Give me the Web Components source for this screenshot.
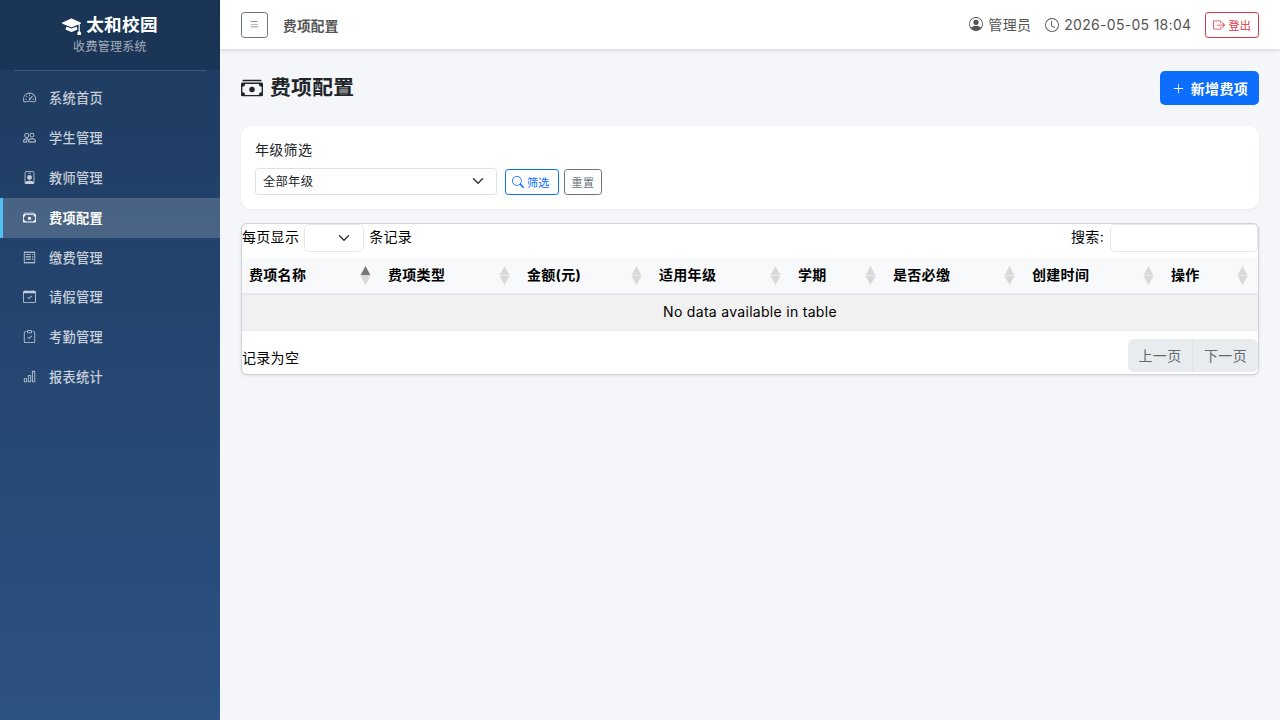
<!DOCTYPE html>
<html lang="zh"><head><meta charset="utf-8"><title>费项配置</title>
<style>
html,body{margin:0;height:100%}
body{font-family:Inter,"Noto Sans CJK SC",sans-serif;background:#f4f6fa;color:#212529;font-size:14px;letter-spacing:.3px}
</style></head><body>
<app-shell>
  <app-sidebar slot="side">
    <nav-item icon="speedometer2">系统首页</nav-item>
    <nav-item icon="people">学生管理</nav-item>
    <nav-item icon="person-badge">教师管理</nav-item>
    <nav-item icon="cash-stack" active>费项配置</nav-item>
    <nav-item icon="receipt">缴费管理</nav-item>
    <nav-item icon="calendar-check">请假管理</nav-item>
    <nav-item icon="clipboard-check">考勤管理</nav-item>
    <nav-item icon="bar-chart">报表统计</nav-item>
  </app-sidebar>
  <top-bar slot="top"></top-bar>
  <page-head></page-head>
  <filter-card></filter-card>
  <fee-table></fee-table>
</app-shell>
<script>
const P={
speedometer2:'<path d="M8 4a.5.5 0 0 1 .5.5V6a.5.5 0 0 1-1 0V4.5A.5.5 0 0 1 8 4M3.732 5.732a.5.5 0 0 1 .707 0l.915.914a.5.5 0 1 1-.708.708l-.914-.915a.5.5 0 0 1 0-.707M2 10a.5.5 0 0 1 .5-.5h1.586a.5.5 0 0 1 0 1H2.5A.5.5 0 0 1 2 10m9.5 0a.5.5 0 0 1 .5-.5h1.5a.5.5 0 0 1 0 1H12a.5.5 0 0 1-.5-.5m.754-4.246a.39.39 0 0 0-.527-.02L7.547 9.31a.91.91 0 1 0 1.302 1.258l3.434-4.297a.39.39 0 0 0-.029-.518z"/><path fill-rule="evenodd" d="M0 10a8 8 0 1 1 15.547 2.661c-.442 1.253-1.845 1.602-2.932 1.25C11.309 13.488 9.475 13 8 13c-1.474 0-3.31.488-4.615.911-1.087.352-2.49.003-2.932-1.25A8 8 0 0 1 0 10m8-7a7 7 0 0 0-6.603 9.329c.203.575.923.876 1.68.63C4.397 12.533 6.358 12 8 12s3.604.532 4.923.96c.757.245 1.477-.056 1.68-.631A7 7 0 0 0 8 3"/>',
people:'<path d="M15 14s1 0 1-1-1-4-5-4-5 3-5 4 1 1 1 1zm-7.978-1L7 12.996c.001-.264.167-1.03.76-1.72C8.312 10.629 9.282 10 11 10c1.717 0 2.687.63 3.24 1.276.593.69.758 1.457.76 1.72l-.008.002-.014.002zM11 7a2 2 0 1 0 0-4 2 2 0 0 0 0 4m3-2a3 3 0 1 1-6 0 3 3 0 0 1 6 0M6.936 9.28a6 6 0 0 0-1.23-.247A7 7 0 0 0 5 9c-4 0-5 3-5 4q0 1 1 1h4.216A2.24 2.24 0 0 1 5 13c0-1.01.377-2.042 1.09-2.904.243-.294.526-.569.846-.816M4.92 10A5.5 5.5 0 0 0 4 13H1c0-.26.164-1.03.76-1.724.545-.636 1.492-1.256 3.16-1.275ZM1.5 5.5a3 3 0 1 1 6 0 3 3 0 0 1-6 0m3-2a2 2 0 1 0 0 4 2 2 0 0 0 0-4"/>',
'person-badge':'<path d="M6.5 2a.5.5 0 0 0 0 1h3a.5.5 0 0 0 0-1zM11 8a3 3 0 1 1-6 0 3 3 0 0 1 6 0"/><path d="M4.5 0A2.5 2.5 0 0 0 2 2.5V14a2 2 0 0 0 2 2h8a2 2 0 0 0 2-2V2.5A2.5 2.5 0 0 0 11.5 0zM3 2.5A1.5 1.5 0 0 1 4.5 1h7A1.5 1.5 0 0 1 13 2.5v10.795a4.2 4.2 0 0 0-.776-.492C11.392 12.387 10.063 12 8 12s-3.392.387-4.224.803a4.2 4.2 0 0 0-.776.492z"/>',
'cash-stack':'<path d="M1 3a1 1 0 0 1 1-1h12a1 1 0 0 1 1 1zm7 8a2 2 0 1 0 0-4 2 2 0 0 0 0 4"/><path d="M0 5a1 1 0 0 1 1-1h14a1 1 0 0 1 1 1v8a1 1 0 0 1-1 1H1a1 1 0 0 1-1-1zm3 0a2 2 0 0 1-2 2v4a2 2 0 0 1 2 2h10a2 2 0 0 1 2-2V7a2 2 0 0 1-2-2z"/>',
receipt:'<path d="M1.92.506a.5.5 0 0 1 .434.14L3 1.293l.646-.647a.5.5 0 0 1 .708 0L5 1.293l.646-.647a.5.5 0 0 1 .708 0L7 1.293l.646-.647a.5.5 0 0 1 .708 0L9 1.293l.646-.647a.5.5 0 0 1 .708 0l.646.647.646-.647a.5.5 0 0 1 .708 0l.646.647.646-.647a.5.5 0 0 1 .801.13l.5 1A.5.5 0 0 1 15 2v12a.5.5 0 0 1-.053.224l-.5 1a.5.5 0 0 1-.8.13L13 14.707l-.646.647a.5.5 0 0 1-.708 0L11 14.707l-.646.647a.5.5 0 0 1-.708 0L9 14.707l-.646.647a.5.5 0 0 1-.708 0L7 14.707l-.646.647a.5.5 0 0 1-.708 0L5 14.707l-.646.647a.5.5 0 0 1-.708 0L3 14.707l-.646.647a.5.5 0 0 1-.801-.13l-.5-1A.5.5 0 0 1 1 14V2a.5.5 0 0 1 .053-.224l.5-1a.5.5 0 0 1 .367-.27m.217 1.338L2 2.118v11.764l.137.274.51-.51a.5.5 0 0 1 .707 0l.646.647.646-.646a.5.5 0 0 1 .708 0l.646.646.646-.646a.5.5 0 0 1 .708 0l.646.646.646-.646a.5.5 0 0 1 .708 0l.646.646.646-.646a.5.5 0 0 1 .708 0l.646.646.646-.646a.5.5 0 0 1 .708 0l.509.509.137-.274V2.118l-.137-.274-.51.51a.5.5 0 0 1-.707 0L12 1.707l-.646.647a.5.5 0 0 1-.708 0L10 1.707l-.646.647a.5.5 0 0 1-.708 0L8 1.707l-.646.647a.5.5 0 0 1-.708 0L6 1.707l-.646.647a.5.5 0 0 1-.708 0L4 1.707l-.646.647a.5.5 0 0 1-.708 0z"/><path d="M3 4.5a.5.5 0 0 1 .5-.5h6a.5.5 0 1 1 0 1h-6a.5.5 0 0 1-.5-.5m0 2a.5.5 0 0 1 .5-.5h6a.5.5 0 1 1 0 1h-6a.5.5 0 0 1-.5-.5m0 2a.5.5 0 0 1 .5-.5h6a.5.5 0 1 1 0 1h-6a.5.5 0 0 1-.5-.5m0 2a.5.5 0 0 1 .5-.5h6a.5.5 0 0 1 0 1h-6a.5.5 0 0 1-.5-.5m8-6a.5.5 0 0 1 .5-.5h1a.5.5 0 0 1 0 1h-1a.5.5 0 0 1-.5-.5m0 2a.5.5 0 0 1 .5-.5h1a.5.5 0 0 1 0 1h-1a.5.5 0 0 1-.5-.5m0 2a.5.5 0 0 1 .5-.5h1a.5.5 0 0 1 0 1h-1a.5.5 0 0 1-.5-.5m0 2a.5.5 0 0 1 .5-.5h1a.5.5 0 0 1 0 1h-1a.5.5 0 0 1-.5-.5"/>',
'calendar-check':'<path d="M10.854 7.146a.5.5 0 0 1 0 .708l-3 3a.5.5 0 0 1-.708 0l-1.5-1.5a.5.5 0 1 1 .708-.708L7.5 9.793l2.646-2.647a.5.5 0 0 1 .708 0"/><path d="M3.5 0a.5.5 0 0 1 .5.5V1h8V.5a.5.5 0 0 1 1 0V1h1a2 2 0 0 1 2 2v11a2 2 0 0 1-2 2H2a2 2 0 0 1-2-2V3a2 2 0 0 1 2-2h1V.5a.5.5 0 0 1 .5-.5M1 4v10a1 1 0 0 0 1 1h12a1 1 0 0 0 1-1V4z"/>',
'clipboard-check':'<path fill-rule="evenodd" d="M10.854 7.146a.5.5 0 0 1 0 .708l-3 3a.5.5 0 0 1-.708 0l-1.5-1.5a.5.5 0 1 1 .708-.708L7.5 9.793l2.646-2.647a.5.5 0 0 1 .708 0"/><path d="M4 1.5H3a2 2 0 0 0-2 2V14a2 2 0 0 0 2 2h10a2 2 0 0 0 2-2V3.5a2 2 0 0 0-2-2h-1v1h1a1 1 0 0 1 1 1V14a1 1 0 0 1-1 1H3a1 1 0 0 1-1-1V3.5a1 1 0 0 1 1-1h1z"/><path d="M9.5 1a.5.5 0 0 1 .5.5v1a.5.5 0 0 1-.5.5h-3a.5.5 0 0 1-.5-.5v-1a.5.5 0 0 1 .5-.5zm-3-1A1.5 1.5 0 0 0 5 1.5v1A1.5 1.5 0 0 0 6.5 4h3A1.5 1.5 0 0 0 11 2.5v-1A1.5 1.5 0 0 0 9.5 0z"/>',
'bar-chart':'<path d="M4 11H2v3h2zm5-4H7v7h2zm5-5v12h-2V2zm-2-1a1 1 0 0 0-1 1v12a1 1 0 0 0 1 1h2a1 1 0 0 0 1-1V2a1 1 0 0 0-1-1zM6 7a1 1 0 0 1 1-1h2a1 1 0 0 1 1 1v7a1 1 0 0 1-1 1H7a1 1 0 0 1-1-1zm-5 4a1 1 0 0 1 1-1h2a1 1 0 0 1 1 1v3a1 1 0 0 1-1 1H2a1 1 0 0 1-1-1z"/>',
mortarboard:'<path d="M8.211 2.047a.5.5 0 0 0-.422 0l-7.5 3.5a.5.5 0 0 0 .025.917l7.5 3a.5.5 0 0 0 .372 0L14 7.14V13a1 1 0 0 0-1 1v2h3v-2a1 1 0 0 0-1-1V6.739l.686-.275a.5.5 0 0 0 .025-.917z"/><path d="M4.176 9.032a.5.5 0 0 0-.656.327l-.5 1.7a.5.5 0 0 0 .294.605l4.5 1.8a.5.5 0 0 0 .372 0l4.5-1.8a.5.5 0 0 0 .294-.605l-.5-1.7a.5.5 0 0 0-.656-.327L8 10.466z"/>',
list:'<path fill-rule="evenodd" d="M2.5 12a.5.5 0 0 1 .5-.5h10a.5.5 0 0 1 0 1H3a.5.5 0 0 1-.5-.5m0-4a.5.5 0 0 1 .5-.5h10a.5.5 0 0 1 0 1H3a.5.5 0 0 1-.5-.5m0-4a.5.5 0 0 1 .5-.5h10a.5.5 0 0 1 0 1H3a.5.5 0 0 1-.5-.5"/>',
'person-circle':'<path d="M11 6a3 3 0 1 1-6 0 3 3 0 0 1 6 0"/><path fill-rule="evenodd" d="M0 8a8 8 0 1 1 16 0A8 8 0 0 1 0 8m8-7a7 7 0 0 0-5.468 11.37C3.242 11.226 4.805 10 8 10s4.757 1.225 5.468 2.37A7 7 0 0 0 8 1"/>',
clock:'<path d="M8 3.5a.5.5 0 0 0-1 0V9a.5.5 0 0 0 .252.434l3.5 2a.5.5 0 0 0 .496-.868L8 8.71z"/><path d="M8 16A8 8 0 1 0 8 0a8 8 0 0 0 0 16m7-8A7 7 0 1 1 1 8a7 7 0 0 1 14 0"/>',
logout:'<path fill-rule="evenodd" d="M10 12.5a.5.5 0 0 1-.5.5h-8a.5.5 0 0 1-.5-.5v-9a.5.5 0 0 1 .5-.5h8a.5.5 0 0 1 .5.5v2a.5.5 0 0 0 1 0v-2A1.5 1.5 0 0 0 9.5 2h-8A1.5 1.5 0 0 0 0 3.5v9A1.5 1.5 0 0 0 1.5 14h8a1.5 1.5 0 0 0 1.5-1.5v-2a.5.5 0 0 0-1 0z"/><path fill-rule="evenodd" d="M15.854 8.354a.5.5 0 0 0 0-.708l-3-3a.5.5 0 0 0-.708.708L14.293 7.5H5.5a.5.5 0 0 0 0 1h8.793l-2.147 2.146a.5.5 0 0 0 .708.708z"/>',
plus:'<path fill-rule="evenodd" d="M8 2a.5.5 0 0 1 .5.5v5h5a.5.5 0 0 1 0 1h-5v5a.5.5 0 0 1-1 0v-5h-5a.5.5 0 0 1 0-1h5v-5A.5.5 0 0 1 8 2"/>',
search:'<path d="M11.742 10.344a6.5 6.5 0 1 0-1.397 1.398h-.001q.044.06.098.115l3.85 3.85a1 1 0 0 0 1.415-1.414l-3.85-3.85a1 1 0 0 0-.115-.1zM12 6.5a5.5 5.5 0 1 1-11 0 5.5 5.5 0 0 1 11 0"/>'
};
const CHEV='<svg viewBox="0 0 16 16" width="16" height="12" style="margin-bottom:1px" preserveAspectRatio="xMidYMid meet"><path fill="none" stroke="#343a40" stroke-linecap="round" stroke-linejoin="round" stroke-width="2" d="m2 5 6 6 6-6"/></svg>';
function def(name,html){customElements.define(name,class extends HTMLElement{
  connectedCallback(){ if(this.shadowRoot)return; const s=this.attachShadow({mode:'open'}); s.innerHTML=typeof html==='function'?html(this):html; }
});}
def('bi-icon',el=>`<style>:host{display:inline-flex;flex:none;width:var(--s,14px);height:var(--s,14px)}svg{width:100%;height:100%;fill:currentColor;display:block}</style><svg viewBox="0 0 16 16">${P[el.getAttribute('name')]}</svg>`);
def('app-shell',`<style>
:host{display:flex;min-height:100vh}
.main{flex:1;min-width:0;display:flex;flex-direction:column}
.content{padding:22px 21px 0;display:flex;flex-direction:column}
</style><slot name="side"></slot><div class="main"><slot name="top"></slot><div class="content"><slot></slot></div></div>`);
def('app-sidebar',`<style>
:host{display:block;flex:none;width:220px;height:100vh;background:linear-gradient(180deg,#1e3a5f,#2c5282);color:#fff}
.brand{height:70px;box-sizing:border-box;padding-top:14px;text-align:center;background:rgba(0,0,0,.1)}
.name{display:flex;justify-content:center;align-items:center;gap:5px;font-size:17.6px;font-weight:700;line-height:22px}
.sub{font-size:12px;line-height:18px;margin-top:2px;color:rgba(255,255,255,.6)}
hr{margin:0 14px;border:0;border-top:1px solid rgba(255,255,255,.15);height:0}
nav{padding-top:7.6px;display:flex;flex-direction:column}
bi-icon{--s:19px}
</style><div class="brand"><div class="name"><bi-icon name="mortarboard"></bi-icon><span>太和校园</span></div><div class="sub">收费管理系统</div></div><hr><nav><slot></slot></nav>`);
def('nav-item',el=>`<style>
:host{display:flex;align-items:center;height:39.8px;box-sizing:border-box;gap:13px;font-size:13.2px;font-weight:500;color:rgba(255,255,255,.75);border-left:3px solid transparent;padding:0 0 1px 20px}
:host([active]){background:rgba(255,255,255,.18);border-left-color:#4fc3f7;color:#fff;font-weight:600}
bi-icon{--s:13px}
</style><bi-icon name="${el.getAttribute('icon')}"></bi-icon><span><slot></slot></span>`);
def('top-bar',`<style>
:host{display:flex;align-items:center;height:49px;flex:none;padding:0 21px;background:#fff;box-shadow:0 1px 4px rgba(0,0,0,.15);position:relative;color:#555;font-size:14px}
.tog{display:flex;align-items:center;justify-content:center;width:27px;height:26px;box-sizing:border-box;border:1px solid #6c757d;border-radius:3.2px;color:#6c757d;--s:10.5px}
.crumb{margin-left:15px;font-size:13.6px;font-weight:600}
.r{margin-left:auto;display:flex;align-items:center}
.i{display:flex;align-items:center;gap:5px;--s:14px}
.i:first-child{padding-bottom:1px}
.i+.i{margin-left:14px}
.out{display:flex;align-items:center;gap:3px;height:26px;box-sizing:border-box;margin-left:14px;padding:0 7px;border:1px solid #dc3545;border-radius:3.2px;color:#dc3545;font-size:11px;--s:12px}
</style><span class="tog"><bi-icon name="list"></bi-icon></span><span class="crumb">费项配置</span>
<div class="r"><span class="i"><bi-icon name="person-circle"></bi-icon>管理员</span><span class="i"><bi-icon name="clock"></bi-icon>2026-05-05 18:04</span><span class="out"><bi-icon name="logout"></bi-icon>登出</span></div>`);
def('page-head',`<style>
:host{display:flex;align-items:center;justify-content:space-between;height:34px;margin-bottom:21px}
h1{margin:0;padding-top:1px;font-size:20.8px;font-weight:700;display:flex;align-items:center;gap:7px;color:#212529;--s:22px;line-height:1.2}
.add{display:flex;align-items:center;gap:6px;height:34px;box-sizing:border-box;padding:0 11px 0 12px;background:#0d6efd;color:#fff;border-radius:5px;font-size:14px;font-weight:600;--s:13px}
</style><h1><bi-icon name="cash-stack"></bi-icon>费项配置</h1><span class="add"><bi-icon name="plus"></bi-icon>新增费项</span>`);
def('filter-card',`<style>
:host{display:block;background:#fff;border-radius:10px;box-shadow:0 1px 3px rgba(0,0,0,.05);padding:13px 14px 0;height:83px;box-sizing:border-box;margin-bottom:14px}
label{display:block;font-size:14px;line-height:21px;margin-bottom:7.5px}
.row{display:flex;align-items:flex-end;gap:6px}
.sel{display:flex;align-items:center;justify-content:space-between;width:242px;height:27.5px;box-sizing:border-box;border:1px solid #dee2e6;border-radius:3.2px;padding:0 10px 0 7px;font-size:12.25px;margin-right:2px}
.b{display:flex;align-items:center;gap:3px;height:26px;box-sizing:border-box;padding:0 8px 0 6px;border:1px solid;border-radius:3.2px;font-size:11px;--s:12px}
.p{border-color:#0d6efd;color:#0d6efd}.s{border-color:#6c757d;color:#6c757d;padding:0 7px;margin-left:-1px}
</style><label>年级筛选</label><div class="row"><span class="sel">全部年级${CHEV}</span><span class="b p"><bi-icon name="search"></bi-icon>筛选</span><span class="b s">重置</span></div>`);
const cols=[['费项名称',139,1],['费项类型',139],['金额(元)',132],['适用年级',139],['学期',95],['是否必缴',139],['创建时间',139],['操作',94]];
const arrow=on=>`<svg class="sort" width="11" height="19" viewBox="0 0 11 19"><path d="M5.5 0 10.5 9.3H.5z" fill="${on?'#777':'#d9d9d9'}"/><path d="M5.5 19 .5 9.7H10.5z" fill="#d9d9d9"/></svg>`;
def('fee-table',`<style>
:host{display:block;background:#fff;border:1px solid #ced4da;border-radius:6px;box-shadow:0 1px 3px rgba(0,0,0,.1);height:152px;box-sizing:border-box;overflow:hidden;color:#000;font-size:14px}
.top{display:flex;justify-content:space-between;align-items:flex-start;height:34px}
.l,.rr{display:flex;align-items:flex-start;gap:5px;line-height:26px}
.rr{gap:6px}
.len{display:flex;align-items:center;justify-content:flex-end;width:60px;height:28px;box-sizing:border-box;border:1px solid #e4e7eb;border-radius:5px;padding-right:11px}
.inp{width:148px;height:28px;box-sizing:border-box;border:1px solid #e4e7eb;border-radius:5px}
table{border-collapse:collapse;table-layout:fixed;width:100%}
th{background:#f8f9fa;height:36px;box-sizing:border-box;padding:0 7px 3px;text-align:left;font-size:14px;font-weight:700;border-bottom:2px solid #e4e7eb;position:relative}
.sort{position:absolute;right:10px;top:8px}
td{height:36px;box-sizing:border-box;text-align:center;background:#f1f1f1;border-bottom:1px solid #e9ecef;padding:0 0 2px}
.foot{display:flex;justify-content:space-between;align-items:flex-start;height:44px}
.info{margin-top:16px;line-height:21px}
.pg{display:flex;margin-top:8px;height:33px;background:#e9ecef;border-radius:6px;color:#62696f}
.pg span{display:flex;align-items:center;justify-content:center;width:64px;padding-bottom:1px;box-sizing:border-box}.pg span+span{width:66px;border-left:1px solid #dee2e6}
</style><div class="top"><span class="l">每页显示<span class="len">${CHEV}</span>条记录</span><span class="rr">搜索:<span class="inp"></span></span></div>
<table><colgroup>${cols.map(c=>`<col style="width:${c[1]}px">`).join('')}</colgroup><thead><tr>${cols.map(c=>`<th>${c[0]}${arrow(c[2])}</th>`).join('')}</tr></thead><tbody><tr><td colspan="8">No data available in table</td></tr></tbody></table>
<div class="foot"><span class="info">记录为空</span><span class="pg"><span>上一页</span><span>下一页</span></span></div>`);
</script>
</body></html>
